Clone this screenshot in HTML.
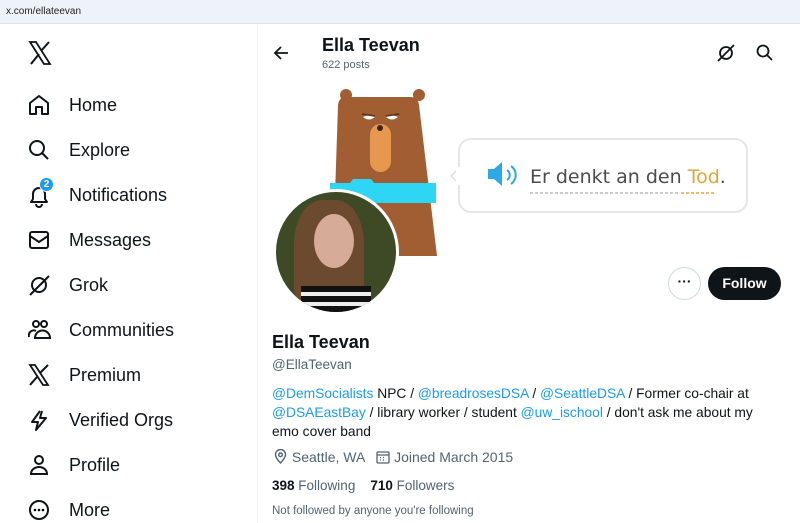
<!DOCTYPE html>
<html><head><meta charset="utf-8"><style>
*{margin:0;padding:0;box-sizing:border-box}
body{width:800px;height:523px;overflow:hidden;background:#fff;font-family:"Liberation Sans",sans-serif;color:#0f1419;position:relative}
.url{position:absolute;left:0;top:0;width:800px;height:24px;background:#eef3fa;border-bottom:1px solid #dde3ea;font-size:10px;color:#222;padding:6px 0 0 6px}
.nav{position:absolute;left:28px;font-size:18px;color:#0f1419}
.nav svg{position:absolute;left:0;top:0}
.nav span{position:absolute;left:41px;top:1px;white-space:nowrap}
.side{position:absolute;left:257px;top:25px;width:1px;height:498px;background:#eff3f4}
.a{position:absolute;white-space:nowrap}
.blue{color:#1d9bf0}
.gray{color:#536471}
</style></head><body>
<div class="url">x.com/ellateevan</div>
<svg class="a" style="left:28px;top:40px" width="24" height="26" viewBox="0 0 24 26"><path d="M2 2h6l14 22h-6z" fill="none" stroke="#0f1419" stroke-width="1.8"/><path d="M3 24L11 14M13 11L21 2" stroke="#0f1419" stroke-width="2"/></svg>

<div class="nav" style="top:94px"><svg width="22" height="22" viewBox="0 0 22 22"><path d="M2 20V9l9-7 9 7v11h-6v-7H8v7z" fill="none" stroke="#0f1419" stroke-width="2" stroke-linejoin="round"/></svg><span>Home</span></div>
<div class="nav" style="top:139px"><svg width="22" height="22" viewBox="0 0 22 22"><circle cx="9" cy="9" r="7" fill="none" stroke="#0f1419" stroke-width="2"/><path d="M14 14l6 6" stroke="#0f1419" stroke-width="2"/></svg><span>Explore</span></div>
<div class="nav" style="top:184px"><svg width="22" height="24" viewBox="0 0 22 24"><path d="M3 18h16l-2-3V10a6 6 0 0 0-12 0v5z" fill="none" stroke="#0f1419" stroke-width="2" stroke-linejoin="round"/><path d="M8 20a3 3 0 0 0 6 0" fill="none" stroke="#0f1419" stroke-width="2"/></svg><span>Notifications</span>
<div style="position:absolute;left:11px;top:-7px;width:15px;height:15px;border-radius:50%;background:#1d9bf0;color:#fff;font-size:10px;font-weight:bold;text-align:center;line-height:13px;border:1px solid #fff">2</div></div>
<div class="nav" style="top:229px"><svg width="22" height="22" viewBox="0 0 22 22"><rect x="2" y="3" width="18" height="16" rx="2" fill="none" stroke="#0f1419" stroke-width="2"/><path d="M2 7l9 6 9-6" fill="none" stroke="#0f1419" stroke-width="2"/></svg><span>Messages</span></div>
<div class="nav" style="top:274px"><svg width="22" height="22" viewBox="0 0 22 22"><circle cx="11" cy="11" r="7" fill="none" stroke="#0f1419" stroke-width="2"/><path d="M2 21L21 2" stroke="#0f1419" stroke-width="2"/></svg><span>Grok</span></div>
<div class="nav" style="top:319px"><svg width="24" height="22" viewBox="0 0 24 22"><circle cx="8" cy="5" r="3" fill="none" stroke="#0f1419" stroke-width="2"/><circle cx="16" cy="5" r="3" fill="none" stroke="#0f1419" stroke-width="2"/><path d="M1 18a5 5 0 0 1 7-6M7 19a5 5 0 0 1 15 0z" fill="none" stroke="#0f1419" stroke-width="2"/></svg><span>Communities</span></div>
<div class="nav" style="top:364px"><svg width="22" height="22" viewBox="0 0 22 22"><path d="M2 1h5l13 20h-5z" fill="none" stroke="#0f1419" stroke-width="1.8"/><path d="M2 21L9 13M12 9L20 1" stroke="#0f1419" stroke-width="2"/></svg><span>Premium</span></div>
<div class="nav" style="top:409px"><svg width="22" height="22" viewBox="0 0 22 22"><path d="M12 2L4 13h6l-2 8 10-12h-6l2-7" fill="none" stroke="#0f1419" stroke-width="2" stroke-linejoin="round"/></svg><span>Verified Orgs</span></div>
<div class="nav" style="top:454px"><svg width="22" height="22" viewBox="0 0 22 22"><circle cx="11" cy="6" r="4" fill="none" stroke="#0f1419" stroke-width="2"/><path d="M3 20a8 7 0 0 1 16 0z" fill="none" stroke="#0f1419" stroke-width="2"/></svg><span>Profile</span></div>
<div class="nav" style="top:499px"><svg width="22" height="22" viewBox="0 0 22 22"><circle cx="11" cy="11" r="9" fill="none" stroke="#0f1419" stroke-width="2"/><circle cx="7" cy="11" r="1.3"/><circle cx="11" cy="11" r="1.3"/><circle cx="15" cy="11" r="1.3"/></svg><span>More</span></div>
<div class="side"></div>

<svg class="a" style="left:273px;top:45px" width="16" height="16" viewBox="0 0 16 16"><path d="M15 8H2M8 2L2 8l6 6" fill="none" stroke="#0f1419" stroke-width="1.8"/></svg>
<div class="a" style="left:322px;top:35px;font-size:18px;font-weight:bold">Ella Teevan</div>
<div class="a gray" style="left:322px;top:59px;font-size:11px">622 posts</div>
<svg class="a" style="left:717px;top:44px" width="18" height="18" viewBox="0 0 18 18"><circle cx="9" cy="9" r="6" fill="none" stroke="#0f1419" stroke-width="1.8"/><path d="M1 17L17 1" stroke="#0f1419" stroke-width="1.8"/></svg>
<svg class="a" style="left:756px;top:44px" width="17" height="17" viewBox="0 0 17 17"><circle cx="7" cy="7" r="5.5" fill="none" stroke="#0f1419" stroke-width="1.8"/><path d="M11 11l5 5" stroke="#0f1419" stroke-width="1.8"/></svg>

<svg class="a" style="left:258px;top:80px" width="542" height="180" viewBox="0 0 542 180">
<circle cx="88" cy="15" r="6" fill="#a25e33"/><circle cx="161" cy="15" r="6" fill="#a25e33"/>
<path d="M88 17h64q8 0 9 8l18 151H75l5-151q1-8 8-8z" fill="#a25e33"/>
<rect x="112" y="44" width="21" height="48" rx="10.5" fill="#e6994e"/>
<path d="M105 37q6-3 12 0q-6 5-12 0zM128 37q6-3 12 0q-6 5-12 0z" fill="#fff"/>
<path d="M104 34l13 2M141 34l-13 2" stroke="#5a2e14" stroke-width="1.5"/>
<circle cx="122" cy="48" r="3" fill="#3a2412"/>
<path d="M72 103h20l3-4h18l3 4h62v20H72z" fill="#2fd6f4"/>
<rect x="201" y="59" width="288" height="73" rx="12" fill="#fff" stroke="#e6e6e6" stroke-width="2"/>
<path d="M201 88l-8 8 8 8" fill="#fff" stroke="#e6e6e6" stroke-width="2"/>
<rect x="198" y="87" width="4" height="18" fill="#fff"/>
<path d="M230 89h6l8-7v24l-8-7h-6z" fill="#2fa8e8"/>
<path d="M249 90a6 6 0 0 1 0 10M253 86a11 11 0 0 1 0 18" fill="none" stroke="#2fa8e8" stroke-width="2"/>
<text x="272" y="103" font-size="19" fill="#4b4b4b" font-family="DejaVu Sans">Er denkt an den <tspan fill="#e8a33a">Tod</tspan>.</text>
<path d="M272 113h148" stroke="#bbb" stroke-width="1.5" stroke-dasharray="3 2"/>
<path d="M423 113h34" stroke="#e8a33a" stroke-width="1.5" stroke-dasharray="3 2"/>
</svg>
<div class="a" style="left:273px;top:189px;width:126px;height:126px;border-radius:50%;background:#fff"></div>
<div class="a" style="left:276px;top:192px;width:120px;height:120px;border-radius:50%;overflow:hidden;background:#3d4a25">
<div style="position:absolute;left:18px;top:8px;width:70px;height:110px;border-radius:40% 40% 20% 20%;background:#6b4a30"></div>
<div style="position:absolute;left:38px;top:22px;width:40px;height:54px;border-radius:50%;background:#d6ab98"></div>
<div style="position:absolute;left:25px;top:94px;width:70px;height:30px;background:repeating-linear-gradient(#111 0 6px,#eee 6px 10px)"></div></div>
<div class="a" style="left:668px;top:267px;width:33px;height:33px;border-radius:50%;border:1px solid #cfd9de;text-align:center;font-size:14px;line-height:26px;font-weight:bold">···</div>
<div class="a" style="left:708px;top:267px;width:73px;height:33px;border-radius:17px;background:#0f1419;color:#fff;font-weight:bold;font-size:14px;text-align:center;line-height:33px">Follow</div>

<div class="a" style="left:272px;top:332px;font-size:18px;font-weight:bold">Ella Teevan</div>
<div class="a gray" style="left:272px;top:357px;font-size:13.5px">@EllaTeevan</div>
<div class="a" style="left:272px;top:384px;font-size:13.8px;line-height:19px;white-space:normal;width:495px"><span class="blue">@DemSocialists</span> NPC / <span class="blue">@breadrosesDSA</span> / <span class="blue">@SeattleDSA</span> / Former co-chair at <span class="blue">@DSAEastBay</span> / library worker / student <span class="blue">@uw_ischool</span> / don't ask me about my emo cover band</div>
<div class="a gray" style="left:273px;top:449px;font-size:14px">
<svg width="15" height="15" viewBox="0 0 15 15" style="vertical-align:-2px"><path d="M7.5 14s5-5 5-8.5a5 5 0 0 0-10 0C2.5 9 7.5 14 7.5 14z" fill="none" stroke="#536471" stroke-width="1.4"/><circle cx="7.5" cy="5.8" r="1.8" fill="none" stroke="#536471" stroke-width="1.4"/></svg> Seattle, WA &nbsp;
<svg width="14" height="14" viewBox="0 0 14 14" style="vertical-align:-2px"><rect x="1" y="2" width="12" height="11" rx="1" fill="none" stroke="#536471" stroke-width="1.3"/><path d="M1 5h12M4 7.5h1M7 7.5h1M4 10h1M7 10h1" stroke="#536471" stroke-width="1.3"/></svg> Joined March 2015</div>
<div class="a" style="left:272px;top:478px;font-size:13.5px"><b>398</b> <span class="gray">Following</span> &nbsp;&nbsp; <b>710</b> <span class="gray">Followers</span></div>
<div class="a gray" style="left:272px;top:505px;font-size:11.5px">Not followed by anyone you're following</div>
</body></html>
